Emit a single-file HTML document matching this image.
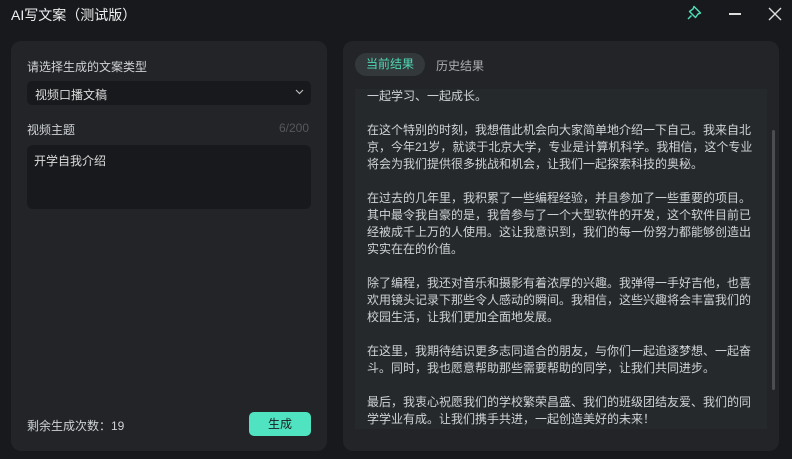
<!DOCTYPE html>
<html><head><meta charset="utf-8"><style>
*{margin:0;padding:0;box-sizing:border-box}
body{width:792px;height:459px;background:#17191c;font-family:"Liberation Sans","Noto Sans CJK SC",sans-serif;color:#cfd2d6;position:relative;overflow:hidden}
.abs{position:absolute}
.panel{background:#222427;border-radius:10px}
.t{font-size:12px;white-space:nowrap}
</style></head><body>
<div class="abs" style="left:11px;top:5px;font-size:14px;color:#f0f0f0">AI写文案（测试版）</div>
<svg class="abs" style="left:686px;top:5px" width="16" height="16" viewBox="0 0 16 16"><path d="M8 1.5 L14.5 8 L12 9 L9.5 12.5 L3.5 6.5 L7 4 Z M5.5 10.5 L2 14" fill="none" stroke="#4fd9b6" stroke-width="1.5" stroke-linejoin="round"/></svg>
<div class="abs" style="left:729px;top:13px;width:12px;height:1.5px;background:#ddd"></div>
<svg class="abs" style="left:768px;top:7px" width="14" height="14"><path d="M1 1L13 13M13 1L1 13" stroke="#ddd" stroke-width="1.4"/></svg>

<div class="abs panel" style="left:11px;top:41px;width:316px;height:410px"></div>
<div class="abs t" style="left:27px;top:58px;color:#cfd2d6">请选择生成的文案类型</div>
<div class="abs" style="left:27px;top:81px;width:284px;height:24px;background:#18191c;border-radius:5px"></div>
<div class="abs t" style="left:35px;top:86px;color:#dcdcdc">视频口播文稿</div>
<svg class="abs" style="left:295px;top:89px" width="9" height="6"><path d="M1 1L4.5 4.5L8 1" fill="none" stroke="#bbb" stroke-width="1.2"/></svg>
<div class="abs t" style="left:27px;top:121px">视频主题</div>
<div class="abs t" style="left:279px;top:121px;color:#55585c">6/200</div>
<div class="abs" style="left:27px;top:145px;width:284px;height:64px;background:#18191c;border-radius:6px"></div>
<div class="abs t" style="left:34px;top:152px;color:#dcdcdc">开学自我介绍</div>
<div class="abs t" style="left:27px;top:417px">剩余生成次数：19</div>
<div class="abs" style="left:249px;top:412px;width:62px;height:24px;background:#50e3c2;border-radius:5px;font-size:12px;color:#1a1c1e;text-align:center;line-height:24px">生成</div>

<div class="abs panel" style="left:343px;top:41px;width:436px;height:410px"></div>
<div class="abs" style="left:355px;top:53px;width:70px;height:23px;background:#33383a;border-radius:12px;font-size:12px;color:#4fd9b6;text-align:center;line-height:23px">当前结果</div>
<div class="abs t" style="left:436px;top:57px;color:#aaadb1">历史结果</div>
<div class="abs" style="left:355px;top:89px;width:412px;height:340px;background:#26292c;overflow:hidden">
<div class="abs t" style="left:12px;top:-1.5px;line-height:17px;color:#cfd2d6">一起学习、一起成长。<br><br>在这个特别的时刻，我想借此机会向大家简单地介绍一下自己。我来自北<br>京，今年21岁，就读于北京大学，专业是计算机科学。我相信，这个专业<br>将会为我们提供很多挑战和机会，让我们一起探索科技的奥秘。<br><br>在过去的几年里，我积累了一些编程经验，并且参加了一些重要的项目。<br>其中最令我自豪的是，我曾参与了一个大型软件的开发，这个软件目前已<br>经被成千上万的人使用。这让我意识到，我们的每一份努力都能够创造出<br>实实在在的价值。<br><br>除了编程，我还对音乐和摄影有着浓厚的兴趣。我弹得一手好吉他，也喜<br>欢用镜头记录下那些令人感动的瞬间。我相信，这些兴趣将会丰富我们的<br>校园生活，让我们更加全面地发展。<br><br>在这里，我期待结识更多志同道合的朋友，与你们一起追逐梦想、一起奋<br>斗。同时，我也愿意帮助那些需要帮助的同学，让我们共同进步。<br><br>最后，我衷心祝愿我们的学校繁荣昌盛、我们的班级团结友爱、我们的同<br>学学业有成。让我们携手共进，一起创造美好的未来！</div>
</div>
<div class="abs" style="left:772px;top:130px;width:3px;height:260px;background:#4a4d52;border-radius:2px"></div>
</body></html>
